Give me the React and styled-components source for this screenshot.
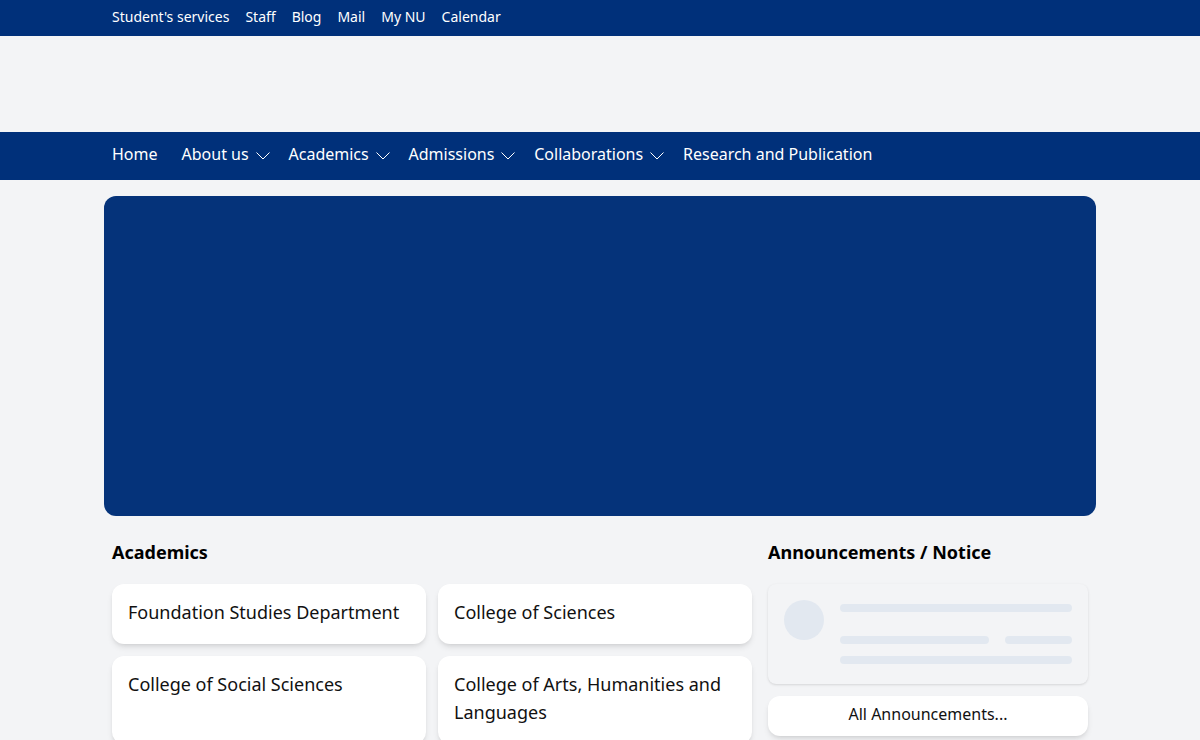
import React from "react";
import styled, { createGlobalStyle } from "styled-components";

const Global = createGlobalStyle`
  html, body { margin: 0; padding: 0; height: 740px; overflow: hidden; background: #f3f4f6; }
  body { font-family: "Noto Sans", "Open Sans", sans-serif; color: #0a0a0a; }
  * { box-sizing: border-box; }
`;

const TopBar = styled.div`
  height: 36px;
  background: #00307a;
`;
const Container = styled.div`
  width: 992px;
  margin: 0 auto;
  padding: 0 8px;
`;
const TopLinks = styled.nav`
  display: flex;
  gap: 16px;
  height: 33px;
  align-items: center;
`;
const TopLink = styled.a`
  color: #fff;
  font-size: 14px;
  line-height: 20px;
`;
const LogoBand = styled.div`
  height: 96px;
`;
const NavBar = styled.div`
  height: 48px;
  background: #00307a;
`;
const NavRow = styled.nav`
  display: flex;
  align-items: center;
  height: 43px;
`;
const NavItem = styled.a`
  display: flex;
  align-items: center;
  color: #fff;
  font-size: 16px;
  line-height: 24px;
  margin-right: ${(p) => (p.$menu ? "18.85px" : "24px")};
`;
const Chevron = styled.svg`
  width: 14px;
  height: 8px;
  margin: 5px 0 0 7px;
  fill: none;
  stroke: #fff;
  stroke-width: 1;
`;
const Hero = styled.div`
  width: 992px;
  height: 320px;
  margin: 16px auto 0;
  background: #05337a;
  border-radius: 12px;
`;
const Columns = styled.div`
  display: grid;
  grid-template-columns: 640px 320px;
  gap: 16px;
  padding-top: 24px;
`;
const Heading = styled.h2`
  margin: 0 0 20px;
  font-size: 18px;
  line-height: 24px;
  font-weight: 700;
  color: #000;
`;
const CardGrid = styled.div`
  display: grid;
  grid-template-columns: 1fr 1fr;
  gap: 12px;
`;
const Card = styled.a`
  display: block;
  min-height: 60px;
  padding: 14px 16px 18px;
  background: #fff;
  border-radius: 12px;
  font-size: 18px;
  line-height: 28px;
  color: #111;
  box-shadow: 0 4px 6px -1px rgba(0, 0, 0, 0.1), 0 2px 4px -2px rgba(0, 0, 0, 0.1);
`;
const SkeletonCard = styled.div`
  display: flex;
  gap: 16px;
  height: 100px;
  padding: 16px;
  background: #f3f4f6;
  border-radius: 8px;
  box-shadow: 0 1px 3px 0 rgba(0, 0, 0, 0.1), 0 1px 2px -1px rgba(0, 0, 0, 0.1);
`;
const SkeletonCircle = styled.div`
  flex: none;
  width: 40px;
  height: 40px;
  border-radius: 50%;
  background: #e2e8f0;
`;
const SkeletonLines = styled.div`
  flex: 1;
  display: flex;
  flex-direction: column;
  gap: 24px;
  padding-top: 4px;
`;
const SkeletonGroup = styled.div`
  display: grid;
  grid-template-columns: repeat(3, 1fr);
  gap: 12px 16px;
`;
const SkeletonBar = styled.div`
  height: 8px;
  border-radius: 4px;
  background: #e2e8f0;
  grid-column: span ${(p) => p.$span || 1};
`;
const AllButton = styled.a`
  display: flex;
  align-items: center;
  justify-content: center;
  height: 40px;
  margin-top: 12px;
  padding-bottom: 4px;
  background: #fff;
  border-radius: 12px;
  font-size: 16px;
  color: #111;
  box-shadow: 0 4px 6px -1px rgba(0, 0, 0, 0.1), 0 2px 4px -2px rgba(0, 0, 0, 0.1);
`;

const topLinks = ["Student's services", "Staff", "Blog", "Mail", "My NU", "Calendar"];
const navItems = [
  ["Home", false],
  ["About us", true],
  ["Academics", true],
  ["Admissions", true],
  ["Collaborations", true],
  ["Research and Publication", false],
];
const cards = [
  "Foundation Studies Department",
  "College of Sciences",
  "College of Social Sciences",
  "College of Arts, Humanities and Languages",
];

export default function App() {
  return (
    <>
      <Global />
      <TopBar>
        <Container>
          <TopLinks>
            {topLinks.map((t) => (
              <TopLink key={t}>{t}</TopLink>
            ))}
          </TopLinks>
        </Container>
      </TopBar>
      <LogoBand />
      <NavBar>
        <Container>
          <NavRow>
            {navItems.map(([t, menu]) => (
              <NavItem key={t} $menu={menu}>
                {t}
                {menu && (
                  <Chevron viewBox="0 0 14 8">
                    <path d="M0.5 0.5 L7 7 L13.5 0.5" />
                  </Chevron>
                )}
              </NavItem>
            ))}
          </NavRow>
        </Container>
      </NavBar>
      <Hero />
      <Container>
        <Columns>
          <section>
            <Heading>Academics</Heading>
            <CardGrid>
              {cards.map((c) => (
                <Card key={c}>{c}</Card>
              ))}
            </CardGrid>
          </section>
          <section>
            <Heading>Announcements / Notice</Heading>
            <SkeletonCard>
              <SkeletonCircle />
              <SkeletonLines>
                <SkeletonBar />
                <SkeletonGroup>
                  <SkeletonBar $span={2} />
                  <SkeletonBar />
                  <SkeletonBar $span={3} />
                </SkeletonGroup>
              </SkeletonLines>
            </SkeletonCard>
            <AllButton>All Announcements...</AllButton>
          </section>
        </Columns>
      </Container>
    </>
  );
}
